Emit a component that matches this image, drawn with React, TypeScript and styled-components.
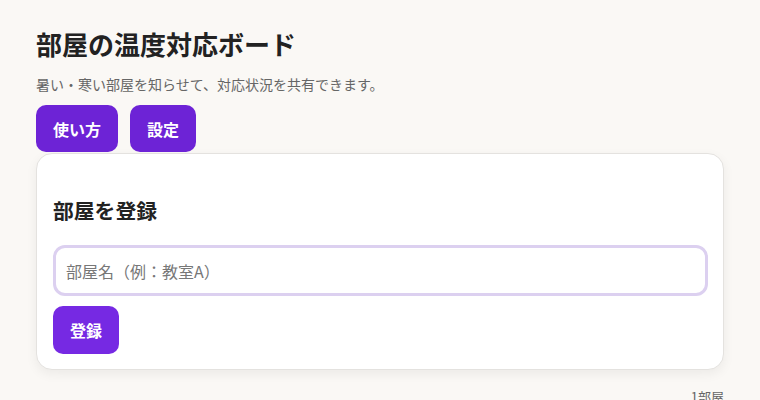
import styled, { createGlobalStyle } from "styled-components";

const GlobalStyle = createGlobalStyle`
  html, body {
    margin: 0;
    padding: 0;
    background: #faf8f5;
  }
  body {
    font-family: "Noto Sans CJK JP", "Noto Sans", sans-serif;
    color: #222222;
  }
  * {
    box-sizing: border-box;
  }
`;

const Page = styled.div`
  padding: 26px 36px 40px 36px;
`;

const Title = styled.h1`
  margin: 0;
  font-size: 26px;
  line-height: 36px;
  font-weight: 700;
  color: #222222;
`;

const Lead = styled.p`
  margin: 12px 0 0;
  font-size: 14px;
  line-height: 20px;
  color: #666666;
`;

const Toolbar = styled.div`
  display: flex;
  gap: 12px;
  margin-top: 11px;
`;

const Button = styled.button<{ $bright?: boolean }>`
  border: none;
  border-radius: 10px;
  padding: 0 17px;
  height: ${(p) => (p.$bright ? "48px" : "47px")};
  background: ${(p) => (p.$bright ? "#7629e3" : "#6d23d6")};
  color: #ffffff;
  font-family: inherit;
  font-size: 16px;
  font-weight: 700;
  cursor: pointer;
`;

const Card = styled.section`
  margin-top: 1px;
  background: #ffffff;
  border: 1px solid #e4e2df;
  border-radius: 16px;
  box-shadow: 0 4px 12px rgba(0, 0, 0, 0.06);
  padding: 41px 15px 15px 16px;
`;

const CardTitle = styled.h2`
  margin: 0;
  font-size: 20.8px;
  line-height: 30px;
  font-weight: 700;
  color: #222222;
`;

const NameInput = styled.input`
  display: block;
  width: 100%;
  margin-top: 20px;
  height: 51px;
  border: 3px solid #dcd0f0;
  border-radius: 12px;
  padding: 0 10px;
  font-family: inherit;
  font-size: 16px;
  color: #222222;
  background: #ffffff;
  outline: none;

  &::placeholder {
    color: #777777;
  }
`;

const Actions = styled.div`
  margin-top: 10px;
`;

const Count = styled.div`
  margin-top: 17px;
  text-align: right;
  font-size: 13px;
  color: #666666;
`;

export default function App() {
  return (
    <>
      <GlobalStyle />
      <Page>
        <Title>部屋の温度対応ボード</Title>
        <Lead>暑い・寒い部屋を知らせて、対応状況を共有できます。</Lead>
        <Toolbar>
          <Button>使い方</Button>
          <Button>設定</Button>
        </Toolbar>
        <Card>
          <CardTitle>部屋を登録</CardTitle>
          <NameInput placeholder="部屋名（例：教室A）" />
          <Actions>
            <Button $bright>登録</Button>
          </Actions>
        </Card>
        <Count>1部屋</Count>
      </Page>
    </>
  );
}
